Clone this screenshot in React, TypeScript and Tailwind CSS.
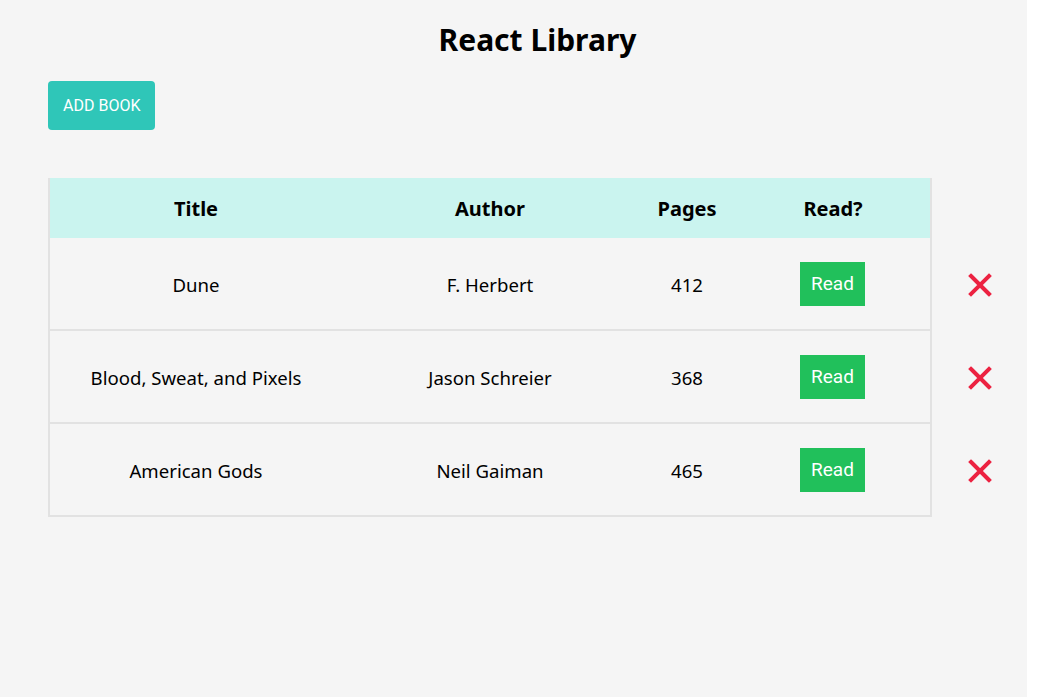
import React from "react";

type Book = { title: string; author: string; pages: number; read: boolean };

const BOOKS: Book[] = [
  { title: "Dune", author: "F. Herbert", pages: 412, read: true },
  { title: "Blood, Sweat, and Pixels", author: "Jason Schreier", pages: 368, read: true },
  { title: "American Gods", author: "Neil Gaiman", pages: 465, read: true },
];

const COLS = "grid grid-cols-[292px_296px_98px_194px]";

function DeleteIcon() {
  return (
    <svg width="24" height="24" viewBox="0 0 24 24" fill="none">
      <path d="M3 3L21 21M21 3L3 21" stroke="#ec2241" strokeWidth="4" strokeLinecap="square" />
    </svg>
  );
}

export default function App() {
  return (
    <div className="min-h-screen bg-white">
      <div
        className="min-h-screen w-[1027px] bg-[#f5f5f5] text-black"
        style={{ fontFamily: "'Noto Sans', sans-serif" }}
      >
        <div className="ml-[48px] w-[979px]">
          <h1 className="pt-[20px] text-center text-[30px] font-bold leading-[40px]">React Library</h1>

          <button
            className="mt-[21px] h-[49px] rounded-[4px] bg-[#2fc6b8] px-[15px] text-[16px] font-normal uppercase text-white"
            style={{ fontFamily: "Roboto, sans-serif" }}
          >
            Add Book
          </button>

          <div className="mt-[48px]">
            <div className="flex">
              <div className={`${COLS} h-[60px] w-[884px] items-center border-x-2 border-[#e2e2e2] bg-[#caf4ef] pt-[2px] text-[20px] font-bold`}>
                <div className="text-center">Title</div>
                <div className="text-center">Author</div>
                <div className="text-center">Pages</div>
                <div className="text-center">Read?</div>
              </div>
            </div>

            {BOOKS.map((b) => (
              <div key={b.title} className="flex">
                <div className={`${COLS} h-[93px] w-[884px] items-center border-x-2 border-b-2 border-[#e2e2e2] text-[18.6px]`}>
                  <div className="pt-[3px] text-center">{b.title}</div>
                  <div className="pt-[3px] text-center">{b.author}</div>
                  <div className="pt-[3px] text-center">{b.pages}</div>
                  <div className="flex justify-center pr-[1px]">
                    <button
                      className="h-[44px] w-[65px] bg-[#21c05b] pt-[2px] text-[19px] text-white"
                      style={{ fontFamily: "Roboto, sans-serif" }}
                    >
                      {b.read ? "Read" : "Not read"}
                    </button>
                  </div>
                </div>
                <div className="flex flex-1 items-center justify-center">
                  <DeleteIcon />
                </div>
              </div>
            ))}
          </div>
        </div>
      </div>
    </div>
  );
}
